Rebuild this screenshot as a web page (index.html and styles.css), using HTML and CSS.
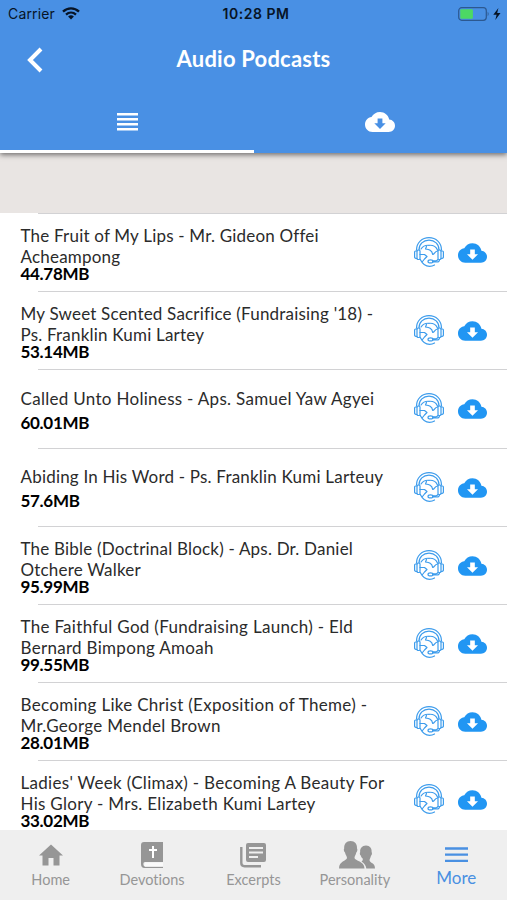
FILE: index.html
```html
<!DOCTYPE html>
<html lang="en">
<head>
    <meta charset="UTF-8">
    <meta name="viewport" content="width=device-width, initial-scale=1.0">
    <title>Audio Podcasts</title>
    <link rel="stylesheet" href="styles.css">
</head>
<body>
    <svg class="symbols" width="0" height="0">
        <symbol id="cloud" viewBox="0 0 30 20">
            <path fill="currentColor" fill-rule="evenodd" d="M24.2 7.6C23.4 3.2 19.6 0 15 0 11.300 0 8.100 2 6.500 5.100 2.800 5.500 0 8.600 0 12.500 0 16.600 3.300 20 7.500 20H23.700C27.200 20 30 17.300 30 13.800 30 10.500 27.500 7.800 24.200 7.600ZM12.600 6.500H17.400V11.300H20.700L15 17 9.300 11.300H12.600Z"/>
        </symbol>
        <symbol id="headset" viewBox="0 0 30 30">
            <g fill="none" stroke="#3d9cec" stroke-width="1.2" stroke-linecap="round" stroke-linejoin="round">
                <path d="M2.500 13C2.500 5.700 8 .700 15 .700S27.500 5.700 27.500 13M5 13C5 7.200 9.200 3.200 15 3.200S25 7.200 25 13"/>
                <rect x="3" y="13" width="3" height="9.500" rx="1"/>
                <rect x="24" y="13" width="3" height="9.500" rx="1"/>
                <path d="M3 14H1.500Q.600 14 .600 15V20Q.600 21.500 3 21.500M27 14H28.500Q29.400 14 29.400 15V20Q29.400 21.500 27 21.500"/>
                <path d="M6.300 22.500C8.500 27 11.500 29.300 15.500 29.300 17.500 29.300 19 28.900 20.500 28"/>
                <path d="M7 12C9 9 12 8 15 8.300 19 8 22 9.500 23.500 13M12.500 9.500L11.500 12C15 12.500 18 13 18.700 17.500 20.500 17.500 20.500 14.500 23.500 14M6 17.500H10.500L13 19.500 10.500 22 8.500 24.500"/>
                <path d="M25.500 22.500Q25.500 25 23 25H18.500M23.500 22.500Q23.500 23.800 22 23.800H18.500"/>
                <ellipse cx="16.500" cy="24.400" rx="2.500" ry="1.500"/>
            </g>
        </symbol>
    </svg>

    <div class="app">
        <header class="header">
            <div class="status">
                <div class="carrier">
                    <span>Carrier</span>
                    <svg width="18" height="13" viewBox="0 0 18 13" fill="none" stroke="#071426" stroke-width="2.300">
                        <path d="M1 4.600C5.500 .200 12.500 .200 17 4.600M4 7.700C6.900 5 11.100 5 14 7.700"/>
                        <path d="M9 12.400L6.100 9.500Q9 7.200 11.900 9.500Z" fill="#071426" stroke="none"/>
                    </svg>
                </div>
                <div class="time">10:28 PM</div>
                <div class="battery">
                    <svg width="43" height="14" viewBox="0 0 43 14">
                        <rect x=".700" y=".700" width="27.600" height="12.600" rx="3" fill="none" stroke="#2c5890" stroke-width="1.200"/>
                        <rect x="2.300" y="2.300" width="12.600" height="9.400" rx="1" fill="#4cd964"/>
                        <path d="M29.700 4.800Q31.600 7 29.700 9.200Z" fill="#2c5890"/>
                        <path d="M40.400 1L35.300 7.700H38.600L37.300 13 42.500 6H39.200Z" fill="#071426"/>
                    </svg>
                </div>
            </div>
            <div class="title-bar">
                <svg class="back" width="16" height="26" viewBox="0 0 16 26"><path d="M14 2L3 13 14 24" fill="none" stroke="#fff" stroke-width="4"/></svg>
                <h1>Audio Podcasts</h1>
            </div>
            <div class="tabs">
                <div class="tab active">
                    <svg class="tab-list" width="21" height="18" viewBox="0 0 21 18"><path d="M0 1.300H21M0 6.300H21M0 11.300H21M0 16.300H21" stroke="#fff" stroke-width="2.600"/></svg>
                </div>
                <div class="tab">
                    <svg class="tab-cloud" width="30" height="20"><use href="#cloud"/></svg>
                </div>
            </div>
        </header>

        <main class="list">
            <div class="row">
                <div class="info"><div class="name">The Fruit of My Lips - Mr. Gideon Offei<br>Acheampong</div><div class="size">44.78MB</div></div>
                <svg class="headset"><use href="#headset"/></svg>
                <svg class="cloud"><use href="#cloud"/></svg>
            </div>
            <div class="row">
                <div class="info"><div class="name">My Sweet Scented Sacrifice (Fundraising '18) -<br>Ps. Franklin Kumi Lartey</div><div class="size">53.14MB</div></div>
                <svg class="headset"><use href="#headset"/></svg>
                <svg class="cloud"><use href="#cloud"/></svg>
            </div>
            <div class="row">
                <div class="info"><div class="name wide">Called Unto Holiness - Aps. Samuel Yaw Agyei</div><div class="size">60.01MB</div></div>
                <svg class="headset"><use href="#headset"/></svg>
                <svg class="cloud"><use href="#cloud"/></svg>
            </div>
            <div class="row">
                <div class="info"><div class="name">Abiding In His Word - Ps. Franklin Kumi Larteuy</div><div class="size">57.6MB</div></div>
                <svg class="headset"><use href="#headset"/></svg>
                <svg class="cloud"><use href="#cloud"/></svg>
            </div>
            <div class="row">
                <div class="info"><div class="name">The Bible (Doctrinal Block) - Aps. Dr. Daniel<br>Otchere Walker</div><div class="size">95.99MB</div></div>
                <svg class="headset"><use href="#headset"/></svg>
                <svg class="cloud"><use href="#cloud"/></svg>
            </div>
            <div class="row">
                <div class="info"><div class="name wide">The Faithful God (Fundraising Launch) - Eld<br>Bernard Bimpong Amoah</div><div class="size">99.55MB</div></div>
                <svg class="headset"><use href="#headset"/></svg>
                <svg class="cloud"><use href="#cloud"/></svg>
            </div>
            <div class="row">
                <div class="info"><div class="name wide">Becoming Like Christ (Exposition of Theme) -<br>Mr.George Mendel Brown</div><div class="size">28.01MB</div></div>
                <svg class="headset"><use href="#headset"/></svg>
                <svg class="cloud"><use href="#cloud"/></svg>
            </div>
            <div class="row">
                <div class="info"><div class="name wide">Ladies' Week (Climax) - Becoming A Beauty For<br>His Glory - Mrs. Elizabeth Kumi Lartey</div><div class="size">33.02MB</div></div>
                <svg class="headset"><use href="#headset"/></svg>
                <svg class="cloud"><use href="#cloud"/></svg>
            </div>
        </main>

        <nav class="nav">
            <div class="nav-item">
                <svg width="24" height="28" viewBox="0 0 24 28"><path fill="#969696" d="M12 3.500L24 14.500H20.500V24.500H14.500V17H9.500V24.500H3.500V14.500H0Z"/></svg>
                <span>Home</span>
            </div>
            <div class="nav-item">
                <svg width="24" height="28" viewBox="0 0 24 28">
                    <path fill="#969696" d="M4 1H23V21H5Q3.300 21 3.300 23T5 25.800H23V27H4.500Q1 27 1 23V4Q1 1 4 1Z"/>
                    <path d="M5 21.500H23V25.500H5Q3.500 23.500 5 21.500Z" fill="#fafafa"/>
                    <path d="M13 5V17M9 9H17" stroke="#fff" stroke-width="2"/>
                </svg>
                <span>Devotions</span>
            </div>
            <div class="nav-item">
                <svg width="26" height="28" viewBox="0 0 26 28">
                    <path fill="#969696" fill-rule="evenodd" d="M8 2H24Q26 2 26 4V19Q26 21 24 21H8Q6 21 6 19V4Q6 2 8 2ZM9 6V8H23V6ZM9 10.500V12.500H23V10.500ZM9 15V17H18V15Z"/>
                    <path d="M1.300 6V22Q1.300 25.200 4.500 25.200H21" fill="none" stroke="#969696" stroke-width="2.400"/>
                </svg>
                <span>Excerpts</span>
            </div>
            <div class="nav-item">
                <svg class="people" width="36" height="28" viewBox="0 0 36 28">
                    <path fill="#969696" d="M11.500 0C15.800 0 18.400 3 18 7.500 18.700 8 18.500 10.500 17.300 11.500 16.800 14 15.500 15 15.500 17 16 20 25.500 20 25.500 27.500H0C0 20 7.500 20 8 17 8 15 6.500 14 6 11.500 4.700 10.500 4.500 8 5.200 7.500 4.800 3 7.500 0 11.500 0Z"/>
                    <path fill="#969696" d="M27 4.500C31 4.500 33 7.500 32.600 11 33.300 12 33 14 32 14.700 31.500 17 30.500 18 30.500 19.300 31 22.500 36 21.500 36 27.500H27.300C27 24.500 25.500 22.500 22.500 20.500 24 20 24 18 23.500 17.300 22.500 16.500 22 15.500 21.800 14.500 20.800 14 20.500 12 21.200 11 20.800 7.500 23 4.500 27 4.500Z"/>
                </svg>
                <span>Personality</span>
            </div>
            <div class="nav-item active">
                <svg width="23" height="25" viewBox="0 0 23 25"><path d="M0 7.500H23M0 13.700H23M0 19.900H23" stroke="#4990e2" stroke-width="2.300"/></svg>
                <span>More</span>
            </div>
        </nav>
    </div>
</body>
</html>
```
FILE: styles.css
```css
* {
    box-sizing: border-box;
}

body {
    margin: 0;
    font-family: Lato, sans-serif;
    font-variant-ligatures: none;
    background-color: #fff;
}

svg {
    display: block;
    flex-shrink: 0;
}

.symbols {
    display: none;
}

.app {
    display: flex;
    flex-direction: column;
    height: 900px;
    overflow: hidden;
    background-color: #e9e5e3;
}

/* header */
.header {
    height: 152.5px;
    flex-shrink: 0;
    background-color: #4990e4;
    box-shadow: 0 2px 5px rgba(0, 0, 0, 0.5);
}

.status {
    display: grid;
    grid-template-columns: 1fr auto 1fr;
    align-items: center;
    height: 28px;
    padding: 0 6px 1px 8px;
    font-family: Inter, sans-serif;
    font-size: 14px;
    color: #071426;
}

.carrier {
    display: flex;
    align-items: center;
    gap: 7px;
    letter-spacing: 0.15px;
}

.time {
    padding-left: 3px;
    font-weight: 600;
    letter-spacing: 0.5px;
}

.battery {
    justify-self: end;
}

.title-bar {
    display: grid;
    grid-template-columns: 60px 1fr 60px;
    align-items: center;
    height: 63px;
    color: #fff;
}

.back {
    margin-left: 27px;
}

h1 {
    margin: 0 0 2px;
    text-align: center;
    font-size: 22px;
    font-weight: 700;
    letter-spacing: 0.2px;
}

.tabs {
    display: grid;
    grid-template-columns: 1fr 1fr;
    height: 61.5px;
    color: #fff;
}

.tab {
    display: flex;
    justify-content: center;
    align-items: center;
    border-bottom: 3px solid transparent;
}

.tab.active {
    border-bottom-color: #fff;
}

.tab-list {
    margin: 4px 0 0 1px;
}

.tab-cloud {
    margin-top: 3px;
}

/* podcast list */
.list {
    flex: 1;
    min-height: 0;
    margin-top: 60.5px;
    overflow: hidden;
    background-color: #fff;
}

.row {
    display: flex;
    align-items: center;
    height: 78.2px;
    padding: 0 20px 0 20.5px;
    background: linear-gradient(#d2d2d4, #d2d2d4) 38px 0 / 100% 1.3px no-repeat;
}

.info {
    flex: 1;
    padding-top: 1.4px;
    white-space: nowrap;
}

.name {
    min-height: 28px;
    font-size: 17px;
    line-height: 21px;
    letter-spacing: 0.2px;
    color: #2b2b2b;
}

.name.wide {
    letter-spacing: 0.3px;
}

.size {
    font-size: 17px;
    font-weight: 700;
    line-height: 14px;
    letter-spacing: -0.3px;
    color: #000;
}

.headset {
    width: 30px;
    height: 30px;
    margin-right: 14px;
}

.cloud {
    width: 29px;
    height: 20px;
    margin-top: 2px;
    color: #2196f3;
}

/* bottom navigation */
.nav {
    display: grid;
    grid-template-columns: repeat(5, 1fr);
    height: 70px;
    flex-shrink: 0;
    padding-top: 11px;
    background-color: #efefef;
}

.nav-item {
    display: flex;
    flex-direction: column;
    align-items: center;
    font-size: 14.5px;
    line-height: 22px;
    color: #969696;
}

.nav-item.active {
    font-size: 17px;
    line-height: 23px;
    color: #4990e2;
}

.people {
    margin-left: 5px;
}
```
